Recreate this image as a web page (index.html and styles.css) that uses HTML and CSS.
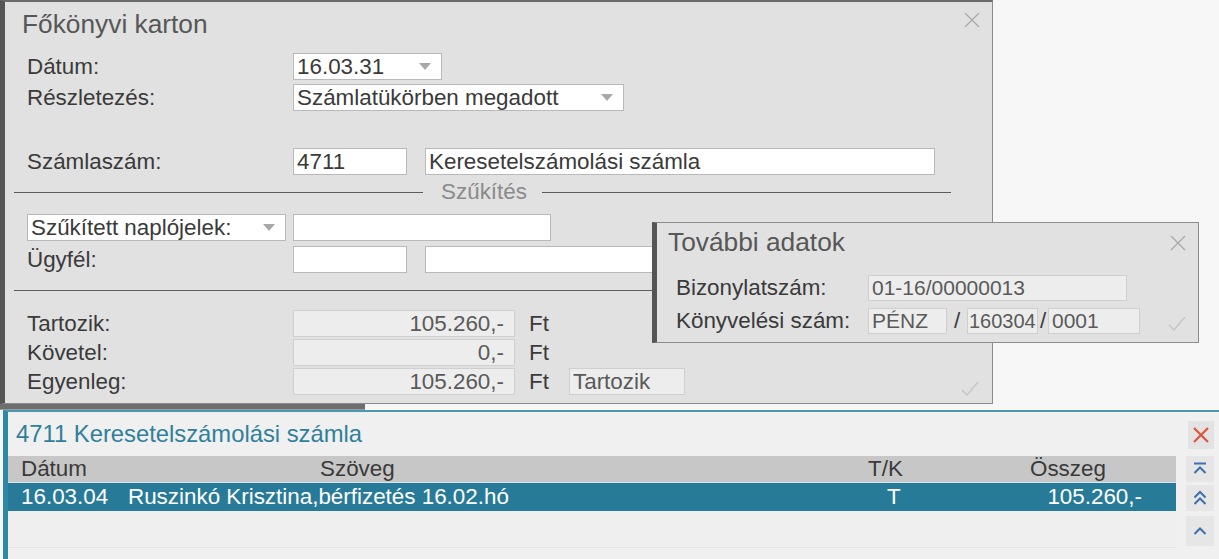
FILE: index.html
```html
<!DOCTYPE html>
<html lang="hu">
<head>
<meta charset="utf-8">
<title>Főkönyvi karton</title>
<link rel="stylesheet" href="styles.css">
</head>
<body>
<div class="desk">
  <section class="dlg main">
    <div class="dlg-head">
      <h1 class="dlg-title">Főkönyvi karton</h1>
      <span class="close">
        <svg width="16" height="16" viewBox="0 0 16 16"><path d="M1 1L15 15M15 1L1 15" stroke="#a9a9a9" stroke-width="1.4" fill="none"/></svg>
      </span>
    </div>

    <div class="row r-datum">
      <span class="lbl">Dátum:</span>
      <div class="sel w148"><span>16.03.31</span><i class="arrow"></i></div>
    </div>
    <div class="row r-resz">
      <span class="lbl">Részletezés:</span>
      <div class="sel w330"><span>Számlatükörben megadott</span><i class="arrow"></i></div>
    </div>

    <div class="row r-szam">
      <span class="lbl">Számlaszám:</span>
      <div class="inp w113">4711</div>
      <div class="inp w509 ml19">Keresetelszámolási számla</div>
    </div>

    <div class="sep"><span class="sep-line"></span><span class="sep-text">Szűkítés</span><span class="sep-line"></span></div>

    <div class="row r-szuk">
      <div class="sel w258 first"><span>Szűkített naplójelek:</span><i class="arrow"></i></div>
      <div class="inp w257 ml8"></div>
    </div>
    <div class="row r-ugyf">
      <span class="lbl">Ügyfél:</span>
      <div class="inp w113"></div>
      <div class="inp w509 ml19"></div>
    </div>

    <div class="hr"></div>

    <div class="row r-sum">
      <span class="lbl">Tartozik:</span>
      <div class="ro w221 num">105.260,-</div>
      <span class="cur">Ft</span>
    </div>
    <div class="row r-sum2">
      <span class="lbl">Követel:</span>
      <div class="ro w221 num">0,-</div>
      <span class="cur">Ft</span>
    </div>
    <div class="row r-sum2">
      <span class="lbl">Egyenleg:</span>
      <div class="ro w221 num">105.260,-</div>
      <span class="cur">Ft</span>
      <div class="ro w115">Tartozik</div>
    </div>
    <span class="ok">
      <svg width="18" height="16" viewBox="0 0 18 16"><path d="M1 9L6 14L17 1" stroke="#c4c4c4" stroke-width="1.3" fill="none"/></svg>
    </span>
  </section>

  <div class="strip"><span class="strip-dark"></span></div>

  <section class="list">
    <div class="list-head">
      <h2 class="list-title">4711 Keresetelszámolási számla</h2>
      <span class="xbtn">
        <svg width="18" height="18" viewBox="0 0 18 18"><path d="M2 2L16 16M16 2L2 16" stroke="#e0533e" stroke-width="2.2" fill="none"/></svg>
      </span>
    </div>
    <div class="list-body">
      <div class="grid">
        <div class="tr th">
          <span class="c-date">Dátum</span>
          <span class="c-text">Szöveg</span>
          <span class="c-tk">T/K</span>
          <span class="c-amt hd">Összeg</span>
        </div>
        <div class="tr sel-row">
          <span class="c-date">16.03.04</span>
          <span class="c-text">Ruszinkó Krisztina,bérfizetés 16.02.hó</span>
          <span class="c-tk">T</span>
          <span class="c-amt">105.260,-</span>
        </div>
        <div class="tr empty"></div>
      </div>
      <div class="nav">
        <span class="nbtn">
          <svg width="18" height="18" viewBox="0 0 18 18"><path d="M3 3.5H15M3.5 13L9 7.5L14.5 13" stroke="#3d6fae" stroke-width="2" fill="none"/></svg>
        </span>
        <span class="nbtn">
          <svg width="18" height="18" viewBox="0 0 18 18"><path d="M3.5 8.5L9 3L14.5 8.5M3.5 15L9 9.5L14.5 15" stroke="#3d6fae" stroke-width="2" fill="none"/></svg>
        </span>
        <span class="nbtn b3">
          <svg width="18" height="18" viewBox="0 0 18 18"><path d="M3.5 12L9 6.5L14.5 12" stroke="#3d6fae" stroke-width="2" fill="none"/></svg>
        </span>
      </div>
    </div>
  </section>

  <section class="dlg extra">
    <div class="dlg-head">
      <h1 class="dlg-title">További adatok</h1>
      <span class="close">
        <svg width="16" height="16" viewBox="0 0 16 16"><path d="M1 1L15 15M15 1L1 15" stroke="#a9a9a9" stroke-width="1.4" fill="none"/></svg>
      </span>
    </div>
    <div class="xrow x1">
      <span class="xlbl">Bizonylatszám:</span>
      <div class="ro w259">01-16/00000013</div>
    </div>
    <div class="xrow x2">
      <span class="xlbl">Könyvelési szám:</span>
      <div class="ro w78">PÉNZ</div>
      <span class="slash">/</span>
      <div class="ro w70 tight">160304</div>
      <span class="slash s2">/</span>
      <div class="ro w91">0001</div>
    </div>
    <span class="ok ok2">
      <svg width="18" height="16" viewBox="0 0 18 16"><path d="M1 9L6 14L17 1" stroke="#c4c4c4" stroke-width="1.3" fill="none"/></svg>
    </span>
  </section>
</div>
</body>
</html>
```

FILE: styles.css
```css
* { box-sizing: border-box; }
html, body { margin: 0; padding: 0; }
body {
  width: 1219px;
  height: 559px;
  overflow: hidden;
  background: #f7f7f7;
  font-family: "Liberation Sans", Arial, sans-serif;
  font-size: 22.4px;
  color: #3a3a3a;
}
.desk { position: relative; width: 1219px; height: 559px; }

.dlg {
  background: #e1e1e1;
  border: 1px solid #8c8c8c;
  border-left: 5px solid #555;
}
.main {
  width: 993px;
  height: 404px;
  border-top: 2px solid #6a6a6a;
  padding: 0 0 0 17px;
  position: relative;
}
.dlg-head {
  display: flex;
  justify-content: space-between;
  align-items: flex-start;
}
.dlg-title {
  margin: 0;
  font-weight: normal;
  font-size: 26.3px;
  line-height: 30px;
  color: #575757;
}
.main .dlg-title { margin-top: 7px; }
.close { display: block; }
.main .close { margin: 6px 12px 0 0; }

.row { display: flex; align-items: center; height: 27px; }
.lbl { width: 271px; padding-left: 5px; flex: none; }
.r-datum { margin-top: 14px; }
.r-resz { margin-top: 4px; }
.r-szam { margin-top: 37px; }
.r-szuk { margin-top: 9px; padding-left: 5px; }
.r-ugyf { margin-top: 5px; }
.r-sum { margin-top: 19px; }
.r-sum2 { margin-top: 2px; }

.sel, .inp, .ro {
  height: 27px;
  line-height: 25px;
  border: 1px solid #b9b9b9;
  background: #fff;
  padding: 0 3px;
  white-space: nowrap;
  overflow: hidden;
  flex: none;
}
.sel { display: flex; align-items: center; justify-content: space-between; padding-right: 10px; }
.arrow {
  width: 0; height: 0;
  border-left: 6px solid transparent;
  border-right: 6px solid transparent;
  border-top: 7px solid #a8a8a8;
}
.ro {
  background: #ededed;
  border-color: #cfcfcf;
  color: #5a5a5a;
}
.num { text-align: right; padding-right: 10px; }
.cur { margin-left: 14px; width: 40px; flex: none; }

.w148 { width: 149px; }
.w330 { width: 331px; }
.w113 { width: 114px; }
.w509 { width: 510px; }
.w258 { width: 259px; }
.w257 { width: 258px; }
.w221 { width: 222px; }
.w115 { width: 116px; }
.ml19 { margin-left: 18px; }
.ml8 { margin-left: 7px; }

.sep {
  display: flex;
  align-items: center;
  width: 937px;
  margin-left: -8px;
  margin-top: 4px;
  height: 26px;
}
.sep-line { flex: 1; height: 1px; background: #5c5c5c; }
.sep-text { color: #8a8a8a; padding: 0 15px 0 18px; }

.hr {
  width: 937px;
  margin-left: -8px;
  margin-top: 17px;
  height: 1px;
  background: #5c5c5c;
}

.ok { position: absolute; display: block; }
.main .ok { right: 13px; bottom: 0; }

.strip { height: 6px; display: flex; }
.strip-dark { width: 365px; height: 6px; background: #6e6e6e; border-bottom: 1px solid #9a9a9a; }

.list {
  height: 149px;
  background: #f0f0f0;
  border-top: 2px solid #4b98b2;
  border-left: 5px solid #2e87a4;
  margin-left: 3px;
}
.list-head {
  display: flex;
  justify-content: space-between;
  align-items: center;
  height: 44px;
  padding: 0 5px 0 8px;
}
.list-title {
  margin: 0;
  font-weight: normal;
  font-size: 23.8px;
  color: #2f7f9b;
  line-height: 30px;
}
.xbtn {
  width: 26px; height: 28px;
  background: #e3e3e3;
  display: flex; align-items: center; justify-content: center;
  margin-top: 2px;
}
.list-body { display: flex; }
.grid { width: 1168px; background: #f0f0f0; }
.tr { display: flex; align-items: center; height: 27px; white-space: nowrap; }
.th { background: #c7c7c7; color: #3a3a3a; border-bottom: 1px solid #d9e6ea; }
.sel-row { background: #277b98; color: #fff; height: 28px; }
.empty { height: 37px; background: #efefef; border-bottom: 1px solid #e4e4e4; }
.c-date { width: 120px; padding-left: 13px; flex: none; }
.c-text { width: 740px; flex: none; }
.th .c-text { padding-left: 192px; }
.c-tk { width: 70px; flex: none; padding-left: 19px; }
.th .c-tk { padding-left: 0; }
.c-amt { width: 204px; flex: none; text-align: right; }
.c-amt.hd { text-align: left; padding-left: 92px; }

.nav {
  display: flex;
  flex-direction: column;
  gap: 3px;
  margin-left: 10px;
}
.nbtn {
  width: 28px; height: 26px;
  background: #e6e6e6;
  display: flex; align-items: center; justify-content: center;
}
.nbtn.b3 { height: 30px; margin-top: 2px; }

.extra {
  position: absolute;
  left: 652px;
  top: 222px;
  width: 547px;
  height: 121px;
  padding-left: 11px;
}
.extra .dlg-title { margin-top: 4px; }
.extra .close { margin: 8px 12px 0 0; }
.xrow { display: flex; align-items: center; height: 27px; }
.x1 { margin-top: 17px; }
.x2 { margin-top: 6px; }
.xlbl { width: 200px; padding-left: 8px; flex: none; }
.extra .ro { height: 26px; line-height: 24px; font-size: 21px; }
.w259 { width: 259px; }
.w78 { width: 79px; }
.w70 { width: 71px; }
.w91 { width: 92px; }
.extra .tight { padding: 0 1px; font-size: 20px; }
.slash { width: 20px; text-align: center; flex: none; }
.s2 { width: 10px; }
.extra .ok { right: 12px; bottom: 4px; }
```
